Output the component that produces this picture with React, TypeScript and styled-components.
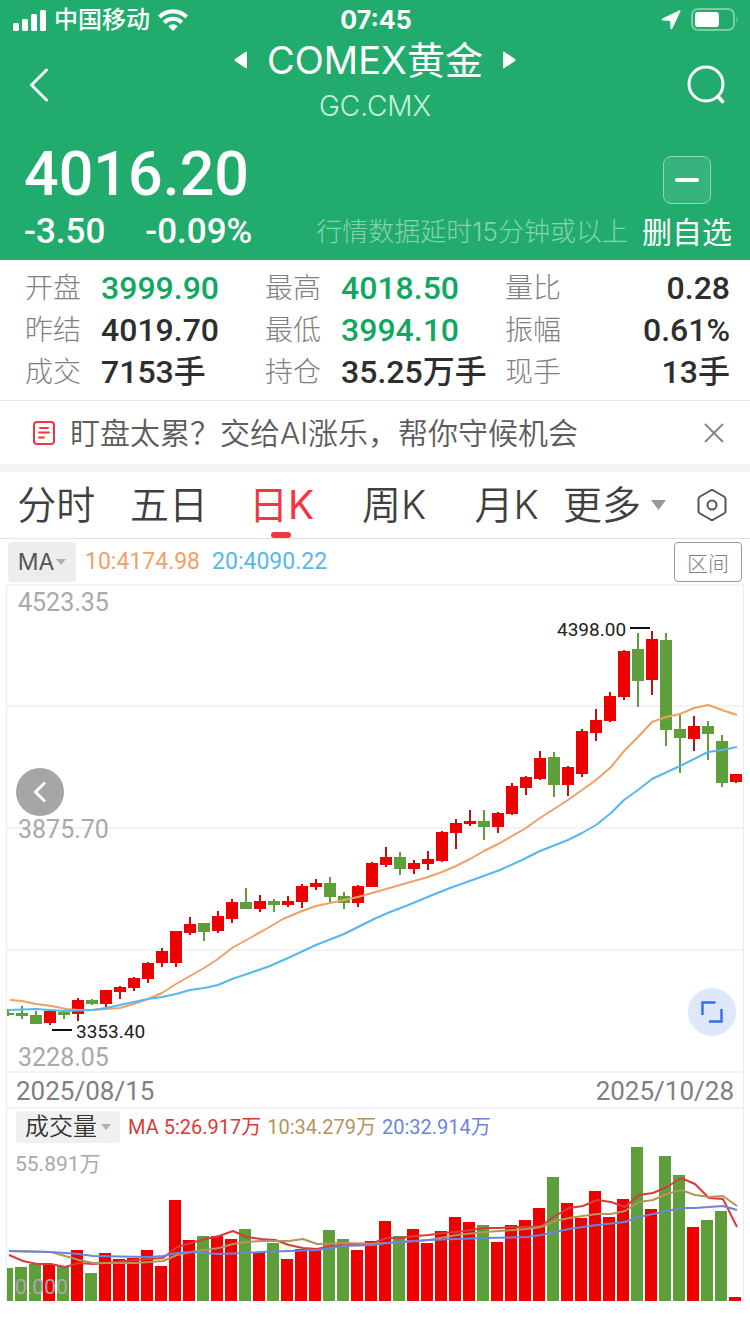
import React from "react";
import styled, { createGlobalStyle } from "styled-components";

const UI_FONT = `Inter, "Noto Sans CJK SC", sans-serif`;
const NUM_FONT = `Roboto, "Noto Sans CJK SC", sans-serif`;
const RISE = "#ee0000";
const FALL = "#5e9f3b";

const GlobalStyle = createGlobalStyle`
  *, *::before, *::after { box-sizing: border-box; }
  body { margin: 0; background: #fff; color: #333; font-family: ${UI_FONT}; }
  button { margin: 0; padding: 0; border: 0; background: none; color: inherit; font: inherit; cursor: pointer; }
  h1, p, dl, dd { margin: 0; }
  svg { display: block; flex: none; }
`;

const Page = styled.main`
  width: 100%;
  min-width: 0;
  overflow-x: hidden;
`;

const Header = styled.header`
  background: #21ac6e;
  color: #fff;
  padding-bottom: 6px;
`;

const StatusBar = styled.div`
  display: grid;
  grid-template-columns: 1fr auto 1fr;
  align-items: center;
  height: 40px;
  padding: 0 11px 0 13px;
`;

const StatusSide = styled.div<{ $end?: boolean }>`
  display: flex;
  align-items: center;
  justify-content: ${(p) => (p.$end ? "flex-end" : "flex-start")};
  gap: ${(p) => (p.$end ? "10px" : "8px")};
`;

const Carrier = styled.span`
  font-size: 24px;
  line-height: 32px;
  font-weight: 500;
`;

const Clock = styled.time`
  font-size: 25px;
  font-weight: 700;
  line-height: 32px;
`;

const NavBar = styled.nav`
  display: grid;
  grid-template-columns: 53px 1fr 48px;
  align-items: center;
  height: 90px;
  padding: 0 20px 0 15px;
`;

const IconButton = styled.button`
  display: flex;
  align-items: center;
  justify-content: center;
  width: 48px;
  height: 48px;
`;

const TitleBlock = styled.div`
  display: flex;
  flex-direction: column;
  align-items: center;
  align-self: start;
  gap: 8px;
`;

const TitleRow = styled.div`
  display: flex;
  align-items: center;
  gap: 20px;
`;

const Title = styled.h1`
  font-size: 38px;
  line-height: 40px;
  font-weight: 400;
`;

const Code = styled.p`
  font-size: 28px;
  line-height: 36px;
  font-weight: 300;
  color: #c8f0da;
`;

const QuoteRow = styled.section`
  display: flex;
  align-items: flex-end;
  padding: 6px 18px 0 24px;
`;

const QuoteMain = styled.div`
  flex: 1;
  padding-bottom: 2px;
  font-family: ${NUM_FONT};
  font-weight: 500;
`;

const Price = styled.div`
  font-size: 61px;
  line-height: 76px;
`;

const Changes = styled.div`
  display: flex;
  gap: 40px;
  font-size: 35px;
  line-height: 40px;
`;

const Delay = styled.p`
  margin-right: 14px;
  padding-bottom: 2px;
  font-size: 26px;
  line-height: 40px;
  font-weight: 300;
  color: #86d3ae;
  white-space: nowrap;
`;

const WatchButton = styled.button`
  display: flex;
  flex-direction: column;
  align-items: center;
  gap: 6px;
  font-size: 30px;
  line-height: 44px;
`;

const WatchIcon = styled.span`
  display: flex;
  align-items: center;
  justify-content: center;
  width: 48px;
  height: 48px;
  border: 1px solid #90d7b5;
  border-radius: 8px;
  background: #37b47d;
`;

const Stats = styled.dl`
  display: grid;
  grid-template-columns: 16fr 16fr 15fr;
  padding: 7px 20px 7px 25px;
  border-bottom: 1px solid #e8e8e8;
`;

const Stat = styled.div`
  display: flex;
  align-items: center;
  height: 42px;
  white-space: nowrap;
`;

const StatLabel = styled.dt`
  width: 76px;
  flex: none;
  font-size: 28px;
  line-height: 42px;
  font-weight: 300;
  color: #808080;
`;

const StatValue = styled.dd<{ $down?: boolean; $end?: boolean }>`
  flex: 1;
  min-width: 0;
  font-family: ${NUM_FONT};
  font-size: 32px;
  line-height: 42px;
  font-weight: 500;
  text-align: ${(p) => (p.$end ? "right" : "left")};
  color: ${(p) => (p.$down ? "#10a760" : "#2e2e2e")};
`;

const Promo = styled.aside`
  display: flex;
  align-items: center;
  height: 71px;
  padding: 0 12px 0 32px;
  border-bottom: 8px solid #f2f4f8;
`;

const PromoText = styled.a`
  flex: 1;
  margin-left: 14px;
  font-size: 30px;
  line-height: 44px;
  font-weight: 350;
  color: #5c5c5c;
  text-decoration: none;
`;

const Tabs = styled.nav`
  display: flex;
  align-items: stretch;
  height: 67px;
  border-bottom: 1px solid #e2e2e2;
`;

const Tab = styled.button<{ $active?: boolean }>`
  position: relative;
  flex: 1;
  font-size: 39px;
  line-height: 66px;
  font-weight: ${(p) => (p.$active ? 400 : 350)};
  color: ${(p) => (p.$active ? "#f23645" : "#404040")};
  &::after {
    content: "";
    display: ${(p) => (p.$active ? "block" : "none")};
    position: absolute;
    left: calc(50% - 10px);
    bottom: 0;
    width: 20px;
    height: 6px;
    border-radius: 3px;
    background: #f23645;
  }
`;

const MoreTab = styled.button`
  display: flex;
  align-items: center;
  gap: 10px;
  margin-right: 8px;
  font-size: 39px;
  line-height: 66px;
  font-weight: 350;
  color: #404040;
`;

const SettingsButton = styled(IconButton)`
  width: 76px;
  height: 66px;
`;

const MaBar = styled.div`
  display: flex;
  align-items: center;
  height: 45px;
  padding: 0 8px;
`;

const MaSelect = styled.button`
  display: flex;
  align-items: center;
  justify-content: center;
  gap: 2px;
  width: 68px;
  height: 40px;
  margin-right: 9px;
  border-radius: 4px;
  background: #ededed;
  font-size: 23px;
  color: #555;
`;

const MaValue = styled.span<{ $color: string }>`
  margin-right: 12px;
  font-family: ${NUM_FONT};
  font-size: 23px;
  line-height: 40px;
  color: ${(p) => p.$color};
`;

const RangeButton = styled.button`
  width: 68px;
  height: 40px;
  margin-left: auto;
  border: 1px solid #999;
  border-radius: 4px;
  font-size: 21px;
  font-weight: 300;
  color: #808080;
`;

const ChartFrame = styled.section`
  margin: 0 6px;
  border: 1px solid #ececec;
  border-top: 2px solid #f3f3f3;
  border-bottom: 0;
`;

const PlotArea = styled.div`
  position: relative;
  border-bottom: 2px solid #f3f3f3;
`;

const Plot = styled.svg`
  width: 100%;
  height: auto;
  font-family: ${NUM_FONT};
`;

const RoundButton = styled.button<{ $blue?: boolean }>`
  position: absolute;
  ${(p) => (p.$blue ? "right: 7px; bottom: 35px;" : "left: 9px; top: 182px;")}
  display: flex;
  align-items: center;
  justify-content: center;
  width: 48px;
  height: 48px;
  border-radius: 50%;
  background: ${(p) => (p.$blue ? "#dfe8fb" : "#a6a6a6")};
`;

const Dates = styled.div`
  display: flex;
  justify-content: space-between;
  height: 36px;
  padding: 0 9px;
  border-bottom: 2px solid #f3f3f3;
  font-family: ${NUM_FONT};
  font-size: 26px;
  line-height: 36px;
  color: #808080;
`;

const VolumeBar = styled.div`
  display: flex;
  align-items: center;
  gap: 6px;
  height: 36px;
  padding-left: 9px;
`;

const VolumeSelect = styled.button`
  display: flex;
  align-items: center;
  justify-content: center;
  gap: 4px;
  width: 104px;
  height: 32px;
  margin-right: 2px;
  border-radius: 4px;
  background: #f0f0f0;
  font-size: 24px;
  line-height: 32px;
  font-weight: 350;
  color: #333;
`;

const VolumeMa = styled.span<{ $color: string }>`
  font-family: ${NUM_FONT};
  font-size: 20px;
  line-height: 32px;
  white-space: nowrap;
  color: ${(p) => p.$color};
`;

type Candle = [rise: 0 | 1, high: number, top: number, bottom: number, low: number, volume: number];

// Each entry: direction, then high / body top / body bottom / low and volume top in plot units.
const candles: Candle[] = [
  [0, 1009, 1013, 1015, 1016, 1268],
  [0, 1006, 1013, 1016, 1019, 1267],
  [0, 1011, 1015, 1024, 1024, 1264],
  [1, 1011, 1011, 1023, 1025, 1264],
  [0, 1012, 1012, 1015, 1019, 1266],
  [1, 998, 1000, 1014, 1021, 1250],
  [0, 999, 1000, 1004, 1005, 1273],
  [1, 990, 990, 1004, 1007, 1253],
  [1, 986, 987, 992, 999, 1259],
  [1, 977, 978, 988, 991, 1258],
  [1, 962, 963, 979, 983, 1250],
  [1, 948, 951, 963, 967, 1266],
  [1, 931, 931, 963, 967, 1200],
  [1, 917, 924, 933, 935, 1240],
  [0, 923, 923, 932, 941, 1236],
  [1, 911, 916, 931, 933, 1236],
  [1, 899, 902, 919, 923, 1239],
  [0, 888, 902, 909, 909, 1229],
  [1, 895, 901, 909, 912, 1252],
  [0, 899, 901, 905, 912, 1243],
  [1, 896, 901, 905, 907, 1259],
  [1, 884, 886, 902, 908, 1249],
  [1, 879, 883, 887, 890, 1248],
  [0, 877, 883, 897, 902, 1230],
  [0, 892, 896, 903, 909, 1239],
  [1, 885, 886, 903, 907, 1250],
  [1, 862, 863, 887, 887, 1241],
  [1, 847, 857, 865, 867, 1221],
  [0, 852, 857, 869, 875, 1236],
  [1, 860, 863, 869, 874, 1229],
  [1, 851, 859, 864, 870, 1243],
  [1, 831, 832, 861, 862, 1231],
  [1, 819, 823, 833, 849, 1217],
  [1, 810, 821, 824, 826, 1222],
  [0, 810, 821, 827, 840, 1225],
  [1, 812, 813, 827, 833, 1242],
  [1, 783, 786, 814, 815, 1225],
  [1, 776, 777, 788, 795, 1220],
  [1, 751, 758, 779, 780, 1208],
  [0, 752, 757, 785, 797, 1177],
  [1, 766, 767, 785, 796, 1203],
  [1, 729, 731, 774, 777, 1218],
  [1, 709, 720, 733, 741, 1191],
  [1, 692, 696, 721, 722, 1217],
  [1, 650, 651, 697, 700, 1199],
  [0, 633, 649, 681, 707, 1147],
  [1, 631, 639, 680, 695, 1209],
  [0, 633, 640, 730, 746, 1156],
  [0, 715, 729, 738, 773, 1175],
  [1, 716, 726, 739, 751, 1227],
  [0, 721, 726, 734, 760, 1220],
  [0, 735, 741, 783, 787, 1211],
  [1, 774, 774, 782, 783, 1297],
];

const priceMa10 =
  "10,1000 22,1001 36,1004 52,1006 66,1009 78,1010 92,1010 106,1009 120,1008 134,1004 148,999 162,993 176,984 190,976 204,968 218,959 232,948 250,938 266,929 283,919 302,911 316,906 330,903 344,900 358,897 372,893 386,889 400,885 414,881 428,877 442,872 456,866 470,859 484,851 500,843 526,828 540,818 554,809 568,800 582,790 596,780 611,767 625,750 638,737 652,722 666,717 680,714 694,708 708,705 722,710 737,715";
const priceMa20 =
  "8,1010 36,1009 64,1011 92,1010 106,1008 120,1005 134,1002 148,999 162,997 176,994 190,990 204,988 218,985 232,979 250,973 270,966 288,958 316,945 344,934 360,926 374,919 390,912 406,906 430,896 450,888 478,878 500,870 522,860 540,851 568,840 582,833 596,825 611,813 624,800 638,790 652,779 680,766 708,752 722,750 737,747";
const volMa5 =
  "9,1255 23,1261 37,1264 51,1264 65,1267 79,1263 93,1264 107,1263 135,1260 163,1258 177,1247 191,1243 205,1239 219,1236 233,1231 247,1237 261,1239 275,1240 289,1245 303,1248 317,1249 331,1246 345,1245 373,1243 387,1238 401,1238 415,1236 429,1235 443,1233 457,1232 485,1228 499,1228 513,1227 527,1227 541,1226 555,1216 569,1208 583,1206 597,1200 611,1202 625,1207 639,1195 653,1193 667,1187 681,1178 695,1184 709,1198 723,1199 737,1227";
const volMa10 =
  "9,1251 51,1252 65,1256 79,1260 93,1263 135,1263 163,1261 177,1255 191,1252 205,1250 219,1248 233,1244 247,1242 261,1241 289,1241 303,1239 317,1244 345,1243 373,1244 387,1243 401,1242 429,1240 457,1235 485,1232 513,1230 527,1229 541,1227 555,1221 569,1218 583,1216 597,1214 611,1214 625,1211 639,1202 653,1200 667,1194 681,1190 695,1195 709,1197 723,1196 737,1206";
const volMa20 =
  "9,1251 51,1252 79,1254 93,1256 149,1257 163,1256 177,1253 191,1252 219,1254 247,1253 261,1252 289,1251 317,1250 331,1248 345,1246 373,1245 387,1243 401,1242 429,1240 457,1239 485,1238 527,1237 541,1235 569,1229 597,1225 625,1222 639,1217 667,1211 681,1208 695,1208 723,1206 737,1210";

interface StatItem {
  label: string;
  value: string;
  down?: boolean;
  end?: boolean;
}

const stats: StatItem[] = [
  { label: "开盘", value: "3999.90", down: true },
  { label: "最高", value: "4018.50", down: true },
  { label: "量比", value: "0.28", end: true },
  { label: "昨结", value: "4019.70" },
  { label: "最低", value: "3994.10", down: true },
  { label: "振幅", value: "0.61%", end: true },
  { label: "成交", value: "7153手" },
  { label: "持仓", value: "35.25万手" },
  { label: "现手", value: "13手", end: true },
];

const tabs = ["分时", "五日", "日K", "周K", "月K"];

function Caret({ width, height, color }: { width: number; height: number; color: string }) {
  return (
    <svg width={width} height={height} viewBox="0 0 10 6" preserveAspectRatio="none" fill={color}>
      <path d="M0 0H10L5 6Z" />
    </svg>
  );
}

function SignalIcon() {
  return (
    <svg width="33" height="21" viewBox="0 0 33 21" fill="#fff">
      <rect x="0" y="13" width="6" height="8" rx="1.5" />
      <rect x="9" y="9" width="6" height="12" rx="1.5" />
      <rect x="18" y="4" width="6" height="17" rx="1.5" />
      <rect x="27" y="0" width="6" height="21" rx="1.5" />
    </svg>
  );
}

function WifiIcon() {
  return (
    <svg width="30" height="22" viewBox="0 0 30 22" fill="none" stroke="#fff" strokeWidth="4.2">
      <path d="M1.4 8A19.2 19.2 0 0 1 28.6 8" />
      <path d="M6.2 13.400A12.4 12.4 0 0 1 23.8 13.400" />
      <path d="M15 22L10.3 17.2A6.6 6.6 0 0 1 19.7 17.2Z" fill="#fff" stroke="none" />
    </svg>
  );
}

function LocationIcon() {
  return (
    <svg width="20" height="20" viewBox="0 0 20 20" fill="#fff">
      <path d="M18 .4Q19.8-.2 19.4 1.6L11.4 18.6Q10.2 20 9.4 18.2L9.2 11 1.6 10.6Q-.2 9.8 1.4 8.6Z" />
    </svg>
  );
}

function BatteryIcon() {
  return (
    <svg width="48" height="24" viewBox="0 0 48 24" fill="none">
      <rect x="1" y="1" width="42" height="21" rx="6" stroke="#7acda5" strokeWidth="2" />
      <rect x="4" y="4" width="24" height="15" rx="3" fill="#fff" />
      <path d="M45.5 8Q48 11.5 45.5 15Z" fill="#7acda5" />
    </svg>
  );
}

function TitleArrow({ right }: { right?: boolean }) {
  return (
    <svg width="13" height="18" viewBox="0 0 13 18" fill="#fff">
      <path d={right ? "M0 1.5Q0 0 1.2 .8L12 8Q13 9 12 10L1.2 17.2Q0 18 0 16.5Z" : "M13 1.5Q13 0 11.8 .8L1 8Q0 9 1 10L11.8 17.2Q13 18 13 16.5Z"} />
    </svg>
  );
}

function PriceChart() {
  return (
    <Plot viewBox="7 586 736 485" role="img" aria-label="日K">
      {[706, 828, 950].map((y) => (
        <path key={y} d={`M7 ${y}H743`} stroke="#f3f3f3" strokeWidth="2" />
      ))}
      <g fontSize="25" fill="#a9a9a9">
        <text x="18" y="611">4523.35</text>
        <text x="18" y="838">3875.70</text>
        <text x="18" y="1066">3228.05</text>
      </g>
      {candles.map(([rise, high, top, bottom, low], i) => {
        const x = 8 + i * 14;
        return (
          <g key={i}>
            <rect x={x - 1} y={high} width="2" height={low - high} fill={rise ? "#c40f0f" : FALL} />
            <rect x={x - 6} y={top} width="12" height={bottom - top} fill={rise ? RISE : FALL} />
          </g>
        );
      })}
      <g fill="none" strokeWidth="2" strokeLinejoin="round">
        <polyline points={priceMa10} stroke="#f0a067" />
        <polyline points={priceMa20} stroke="#55b8ee" />
      </g>
      <path d="M630 628H650M52 1030H72" stroke="#111" strokeWidth="2" />
      <g fontSize="19" fill="#222">
        <text x="557" y="636">4398.00</text>
        <text x="76" y="1038">3353.40</text>
      </g>
    </Plot>
  );
}

function VolumeChart() {
  return (
    <Plot viewBox="7 1145 736 156" role="img" aria-label="成交量">
      {candles.map(([rise, , , , , top], i) => (
        <rect key={i} x={1 + i * 14} y={top} width="12" height={1301 - top} fill={rise ? RISE : FALL} />
      ))}
      <g fill="none" strokeWidth="2" strokeLinejoin="round">
        <polyline points={volMa5} stroke="#d93a3a" />
        <polyline points={volMa10} stroke="#b4935d" />
        <polyline points={volMa20} stroke="#6b85dc" />
      </g>
      <g fontSize="21" fill="#a9a9a9">
        <text x="15" y="1171">55.891万</text>
        <text x="15" y="1294">0.000</text>
      </g>
    </Plot>
  );
}

export default function App() {
  return (
    <Page>
      <GlobalStyle />
      <Header>
        <StatusBar>
          <StatusSide>
            <SignalIcon />
            <Carrier>中国移动</Carrier>
            <WifiIcon />
          </StatusSide>
          <Clock>07:45</Clock>
          <StatusSide $end>
            <LocationIcon />
            <BatteryIcon />
          </StatusSide>
        </StatusBar>
        <NavBar>
          <IconButton aria-label="返回">
            <svg width="20" height="34" viewBox="0 0 20 34" fill="none" stroke="#fff" strokeWidth="3" strokeLinecap="round" strokeLinejoin="round">
              <path d="M17.5 2L2.5 17L17.5 32" />
            </svg>
          </IconButton>
          <TitleBlock>
            <TitleRow>
              <TitleArrow />
              <Title>COMEX黄金</Title>
              <TitleArrow right />
            </TitleRow>
            <Code>GC.CMX</Code>
          </TitleBlock>
          <IconButton aria-label="搜索">
            <svg width="38" height="40" viewBox="0 0 38 40" fill="none" stroke="#fff" strokeWidth="3" strokeLinecap="round">
              <circle cx="19" cy="19" r="17" />
              <path d="M31 31.5L35.5 36.5" strokeWidth="3.6" />
            </svg>
          </IconButton>
        </NavBar>
        <QuoteRow>
          <QuoteMain>
            <Price>4016.20</Price>
            <Changes>
              <span>-3.50</span>
              <span>-0.09%</span>
            </Changes>
          </QuoteMain>
          <Delay>行情数据延时15分钟或以上</Delay>
          <WatchButton>
            <WatchIcon>
              <svg width="24" height="4" viewBox="0 0 24 4" fill="#fff">
                <rect width="24" height="4" rx="2" />
              </svg>
            </WatchIcon>
            删自选
          </WatchButton>
        </QuoteRow>
      </Header>

      <Stats>
        {stats.map((s) => (
          <Stat key={s.label}>
            <StatLabel>{s.label}</StatLabel>
            <StatValue $down={s.down} $end={s.end}>
              {s.value}
            </StatValue>
          </Stat>
        ))}
      </Stats>

      <Promo>
        <svg width="24" height="26" viewBox="0 0 24 26" fill="none" stroke="#ee3445" strokeWidth="2" strokeLinecap="round">
          <rect x="2" y="2" width="20" height="22" rx="3" />
          <path d="M8 8H16M7 12.5H17M7 17.5H12" />
        </svg>
        <PromoText href="#ai">盯盘太累？交给AI涨乐，帮你守候机会</PromoText>
        <IconButton aria-label="关闭">
          <svg width="20" height="20" viewBox="0 0 20 20" fill="none" stroke="#888" strokeWidth="2">
            <path d="M1 1L19 19M19 1L1 19" />
          </svg>
        </IconButton>
      </Promo>

      <Tabs>
        {tabs.map((t) => (
          <Tab key={t} $active={t === "日K"}>
            {t}
          </Tab>
        ))}
        <MoreTab>
          更多
          <Caret width={15} height={10} color="#999" />
        </MoreTab>
        <SettingsButton aria-label="设置">
          <svg width="30" height="34" viewBox="0 0 30 34" fill="none" stroke="#555" strokeWidth="2" strokeLinejoin="round">
            <path d="M13.5 2.5Q15 1.7 16.5 2.5L27 8.5Q28.5 9.4 28.5 11V23Q28.5 24.6 27 25.5L16.5 31.5Q15 32.3 13.5 31.5L3 25.5Q1.5 24.6 1.5 23V11Q1.5 9.4 3 8.5Z" />
            <circle cx="15" cy="17" r="4.5" />
          </svg>
        </SettingsButton>
      </Tabs>

      <MaBar>
        <MaSelect>
          MA
          <Caret width={10} height={6} color="#b0b0b0" />
        </MaSelect>
        <MaValue $color="#f3a067">10:4174.98</MaValue>
        <MaValue $color="#57b6ec">20:4090.22</MaValue>
        <RangeButton>区间</RangeButton>
      </MaBar>

      <ChartFrame>
        <PlotArea>
          <PriceChart />
          <RoundButton aria-label="向前">
            <svg width="14" height="22" viewBox="0 0 14 22" fill="none" stroke="#fff" strokeWidth="3">
              <path d="M12 1.5L2.5 11L12 20.5" />
            </svg>
          </RoundButton>
          <RoundButton $blue aria-label="全屏">
            <svg width="24" height="24" viewBox="0 0 24 24" fill="none" stroke="#2f72e2" strokeWidth="2.4">
              <path d="M15.5 2.500H2.500V15M21.500 9V21.500H9" />
            </svg>
          </RoundButton>
        </PlotArea>
        <Dates>
          <time>2025/08/15</time>
          <time>2025/10/28</time>
        </Dates>
        <VolumeBar>
          <VolumeSelect>
            成交量
            <Caret width={10} height={6} color="#b0b0b0" />
          </VolumeSelect>
          <VolumeMa $color="#d93a3a">MA 5:26.917万</VolumeMa>
          <VolumeMa $color="#b4935d">10:34.279万</VolumeMa>
          <VolumeMa $color="#6b85dc">20:32.914万</VolumeMa>
        </VolumeBar>
        <VolumeChart />
      </ChartFrame>
    </Page>
  );
}
